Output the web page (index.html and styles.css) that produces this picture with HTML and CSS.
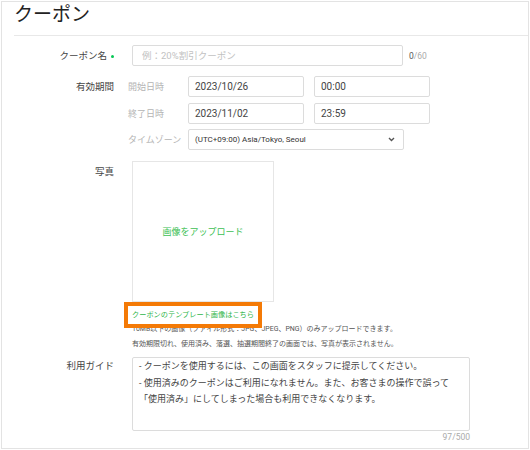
FILE: index.html
```html
<!DOCTYPE html>
<html lang="ja">
<head>
  <meta charset="UTF-8">
  <title>クーポン</title>
  <link rel="stylesheet" href="styles.css">
</head>
<body>

  <div class="page">
    <h1 class="page-title">クーポン</h1>

    <div class="form">
      <!-- クーポン名 -->
      <div class="row row-name">
        <div class="label">クーポン名<span class="req"></span></div>
        <div class="field field-inline">
          <input class="input input-name" type="text" placeholder="例：20%割引クーポン">
          <span class="count"><b>0</b>/60</span>
        </div>
      </div>

      <!-- 有効期間 -->
      <div class="row row-period">
        <div class="label">有効期間</div>
        <div class="field period">
          <div class="sub-row">
            <span class="sub-label">開始日時</span>
            <input class="input input-date" type="text" value="2023/10/26">
            <input class="input input-date" type="text" value="00:00">
          </div>
          <div class="sub-row">
            <span class="sub-label">終了日時</span>
            <input class="input input-date" type="text" value="2023/11/02">
            <input class="input input-date" type="text" value="23:59">
          </div>
          <div class="sub-row">
            <span class="sub-label">タイムゾーン</span>
            <div class="select">
              <span>(UTC+09:00) Asia/Tokyo, Seoul</span>
              <svg width="7" height="5" viewBox="0 0 7 5"><path d="M1 1 L3.5 3.5 L6 1" fill="none" stroke="#555" stroke-width="1.4"/></svg>
            </div>
          </div>
        </div>
      </div>

      <!-- 写真 -->
      <div class="row row-photo">
        <div class="label">写真</div>
        <div class="field">
          <div class="upload">画像をアップロード</div>
          <a class="template-link" href="#">クーポンのテンプレート画像はこちら</a>
          <p class="note">10MB以下の画像（ファイル形式：JPG、JPEG、PNG）のみアップロードできます。<br>有効期限切れ、使用済み、落選、抽選期間終了の画面では、写真が表示されません。</p>
        </div>
      </div>

      <!-- 利用ガイド -->
      <div class="row row-guide">
        <div class="label">利用ガイド</div>
        <div class="field">
          <textarea class="guide" readonly>- クーポンを使用するには、この画面をスタッフに提示してください。
- 使用済みのクーポンはご利用になれません。また、お客さまの操作で誤って
「使用済み」にしてしまった場合も利用できなくなります。</textarea>
          <div class="count count-guide">97/500</div>
        </div>
      </div>
    </div>
  </div>

</body>
</html>
```

FILE: styles.css
```css
body {
  margin: 0;
  background-color: #fff;
  font-family: Roboto, "Noto Sans CJK JP", sans-serif;
  color: #333;
}

.page {
  box-sizing: border-box;
  width: 528px;
  height: 448px;
  margin: 1px 0 0 1px;
  border: 1px solid #e3e3e3;
  padding-left: 12px;
}

.page-title {
  margin: 0;
  height: 33px;
  line-height: 26px;
  font-size: 19px;
  font-weight: normal;
  color: #222;
  border-bottom: 1px solid #e8e8e8;
}

.form {
  display: flex;
  flex-direction: column;
  padding-top: 9px;
}

.row {
  display: grid;
  grid-template-columns: 102px 338px;
  column-gap: 16px;
  align-items: start;
}

.row-period {
  margin-top: 10px;
}

.row-photo {
  margin-top: 11px;
}

.row-guide {
  margin-top: 5px;
}

.label {
  text-align: right;
  font-size: 9.5px;
  line-height: 21px;
  color: #444;
  padding-right: 2px;
}

.row-guide .label {
  line-height: 17px;
}

.req {
  display: inline-block;
  width: 3px;
  height: 3px;
  border-radius: 50%;
  background-color: #06c755;
  margin-left: 4px;
  vertical-align: middle;
}

.field-inline {
  display: flex;
  align-items: center;
  gap: 6px;
}

.input {
  box-sizing: border-box;
  height: 21px;
  border: 1px solid #dcdcdc;
  border-radius: 2px;
  padding: 0 6px;
  font-family: Roboto, "Noto Sans CJK JP", sans-serif;
  font-size: 10px;
  color: #444;
  background: #fff;
  outline: none;
}

.input-name {
  width: 271px;
  padding-left: 9px;
  font-size: 9.5px;
}

.input-name::placeholder {
  color: #c2c2c2;
}

.count {
  font-size: 8.5px;
  color: #aaa;
}

.count b {
  font-weight: normal;
  color: #555;
}

.period {
  display: flex;
  flex-direction: column;
  gap: 5.5px;
}

.sub-row {
  display: flex;
  align-items: center;
  margin-left: -4px;
}

.sub-label {
  width: 60px;
  font-size: 9px;
  color: #b4b4b4;
}

.input-date {
  width: 116px;
  margin-right: 10px;
}

.select {
  box-sizing: border-box;
  width: 216px;
  height: 21px;
  border: 1px solid #dcdcdc;
  border-radius: 2px;
  padding: 0 8px 0 6px;
  display: flex;
  align-items: center;
  justify-content: space-between;
  font-size: 8px;
  color: #333;
}

.upload {
  box-sizing: border-box;
  width: 142px;
  height: 141px;
  border: 1px solid #e6e6e6;
  display: flex;
  align-items: center;
  justify-content: center;
  font-size: 9px;
  color: #3dbf55;
}

.template-link {
  position: relative;
  z-index: 1;
  display: inline-block;
  margin: 4px 0 0 -2px;
  padding: 0 2px;
  line-height: 14px;
  font-size: 7.2px;
  color: #2fb64a;
  text-decoration: none;
  outline: 4px solid #f47a06;
  outline-offset: 2px;
}

.note {
  margin: 0;
  font-size: 7px;
  line-height: 15px;
  color: #555;
}

.guide {
  box-sizing: border-box;
  display: block;
  width: 338px;
  height: 74px;
  margin: 0;
  border: 1px solid #dcdcdc;
  border-radius: 2px;
  padding: 0 6px;
  resize: none;
  overflow: hidden;
  font-family: Roboto, "Noto Sans CJK JP", sans-serif;
  font-size: 9px;
  line-height: 16.5px;
  color: #444;
  outline: none;
}

.count-guide {
  text-align: right;
  line-height: 13px;
}
```
